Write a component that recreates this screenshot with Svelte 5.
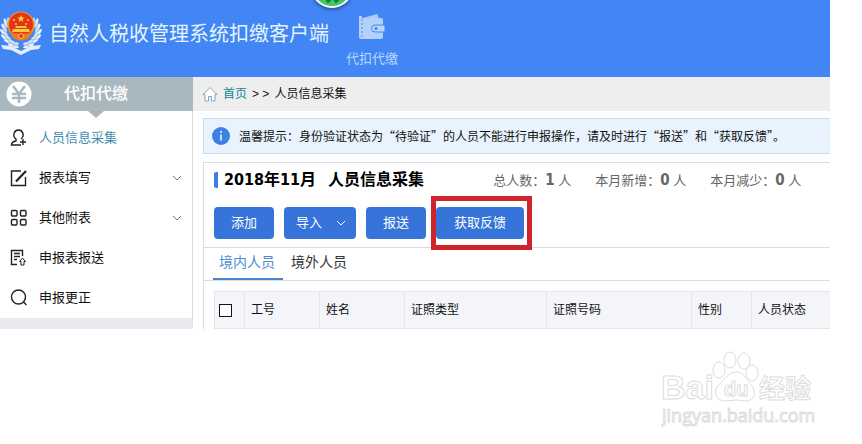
<script lang="ts">
  interface MenuItem {
    label: string;
    icon: string;
    active?: boolean;
    expandable?: boolean;
  }

  const menu: MenuItem[] = [
    { label: "人员信息采集", icon: "person", active: true },
    { label: "报表填写", icon: "edit", expandable: true },
    { label: "其他附表", icon: "grid", expandable: true },
    { label: "申报表报送", icon: "submit" },
    { label: "申报更正", icon: "search" },
  ];

  const stats = [
    { label: "总人数", value: 1 },
    { label: "本月新增", value: 0 },
    { label: "本月减少", value: 0 },
  ];

  const tabs = ["境内人员", "境外人员"];
  const columns = [
    { label: "工号", width: 75 },
    { label: "姓名", width: 85 },
    { label: "证照类型", width: 142 },
    { label: "证照号码", width: 145 },
    { label: "性别", width: 60 },
    { label: "人员状态", width: 0 },
  ];

  // leaf positions along the left half of the wreath, mirrored for the right
  const leaves = [
    [5, 10, -15],
    [3, 15, -25],
    [2, 20, -35],
    [3, 25, -45],
    [6, 29, -60],
    [10, 33, -70],
    [15, 35, -85],
  ];

  let activeTab = $state(0);
  let allChecked = $state(false);
</script>

<div class="client">
  <header class="topbar">
    <svg class="emblem" viewBox="0 0 40 44" aria-hidden="true">
      {#each [false, true] as flipped}
        <g transform={flipped ? "translate(40 0) scale(-1 1)" : undefined}>
          <path d="M6 9C1 20 4 30 17 35" fill="none" stroke="#9fbce3" stroke-width="4" />
          {#each leaves as [x, y, angle]}
            <g transform={`translate(${x} ${y}) rotate(${angle})`}>
              <ellipse cx="-1" rx="1.3" ry="3" fill="#e8f1fb" />
              <ellipse cx="2.500" rx="1.2" ry="2.800" fill="#d3e1f3" />
            </g>
          {/each}
        </g>
      {/each}
      <path d="M0 34L10 35 20 40 30 35 40 34 38 38 30 39 20 44 10 39 2 38Z" fill="#e3eefb" />
      <circle cx="20" cy="14" r="13.5" fill="#f2952b" />
      <circle cx="20" cy="13.5" r="12" fill="#e43417" />
      <path d="M20 4l1 2.500h2.700l-2.200 1.700.8 2.700-2.300-1.600-2.300 1.600.8-2.700-2.200-1.700H19z" fill="#ffdc40" />
      <g fill="#ffc83c">
        <circle cx="13" cy="9" r="1" /><circle cx="27" cy="9" r="1" />
        <circle cx="15" cy="13" r="1" /><circle cx="25" cy="13" r="1" />
        <path d="M15 15h10l1 2H14zM12 18h16l1 3H11z" />
      </g>
      <path d="M9 21q11 4 22 0l-3 6q-8 5-16 0z" fill="#ef7a25" />
      <circle cx="20" cy="25" r="2.500" fill="#e0431c" stroke="#ffc04a" />
    </svg>
    <h1>自然人税收管理系统扣缴客户端</h1>
    <a class="module" href="#withhold">
      <svg viewBox="0 0 28 26" width="28" height="26" aria-hidden="true">
        <path d="M5 4L19 0l2 4z" fill="#a9ccfb" />
        <path d="M1 2h3v2h19q2 0 2 2v17q0 2-2 2H3q-2 0-2-2z" fill="#b4d1fb" />
        <path d="M4 5v19" stroke="#4e89e8" stroke-dasharray="2 2" />
        <path d="M27 11H17q-3.500 0-3.500 3.500T17 18h10z" fill="#b9d5fc" stroke="#4285f4" />
        <circle cx="18" cy="14.500" r="1.500" fill="#4285f4" />
      </svg>
      <span>代扣代缴</span>
    </a>
    <span class="float-ball">
      <svg viewBox="0 0 42 42" width="42" height="42" aria-hidden="true">
        <circle cx="21" cy="21" r="20" fill="#47c665" stroke="#fff" stroke-width="2" />
        <path d="M15 33l2 3 3-3m3 0l2 3 3-3" fill="none" stroke="#187c31" stroke-width="2" />
      </svg>
    </span>
  </header>

  <div class="body">
    <aside class="sidebar">
      <div class="side-title">
        <svg viewBox="0 0 26 26" width="26" height="26" aria-hidden="true">
          <circle cx="13" cy="13" r="12.500" fill="#fff" />
          <path d="M7 5l6 8 6-8M13 13v9M6 13h14M6 17h14" fill="none" stroke="#a9b8bf" stroke-width="2.500" />
        </svg>
        <h2>代扣代缴</h2>
      </div>
      <nav>
        {#each menu as item}
          <a href="#menu" class="menu-item" class:active={item.active}>
            <svg class="menu-icon" viewBox="0 0 18 18" aria-hidden="true">
              {#if item.icon === "person"}
                <path d="M11 16H1.500c0-2.500 1.500-3.500 4.500-4V10C4 8.500 3.500 6 4.200 4q1-3 4.300-3t4.300 3c.7 2 .2 4.500-1.800 6M13 10v6M10 13h6" />
              {:else if item.icon === "edit"}
                <path d="M11 2H1.500v14.500h14V8" />
                <path d="M6 12.500L16 2" stroke-width="2.200" />
              {:else if item.icon === "grid"}
                <rect x="1.500" y="1.500" width="5.500" height="5.500" rx="1" />
                <rect x="10.500" y="1.500" width="5.500" height="5.500" rx="1" />
                <rect x="1.500" y="10.500" width="5.500" height="5.500" rx="1" />
                <rect x="10.500" y="10.500" width="5.500" height="5.500" rx="1" />
              {:else if item.icon === "submit"}
                <path d="M7 15.500H1.500v-14h11V7M4 4.500h6M4 7.500h6M4 10.500h3" />
                <path d="M12.500 9L9.500 12.500h1.500v3.500h3v-3.500h1.500z" stroke-width="1" />
              {:else}
                <circle cx="8.500" cy="8" r="7" />
                <path d="M13.500 13l3 3" />
              {/if}
            </svg>
            <span>{item.label}</span>
            {#if item.expandable}
              <svg class="chevron" viewBox="0 0 10 6" width="10" height="6" aria-hidden="true">
                <path d="M1 1l4 4 4-4" />
              </svg>
            {/if}
          </a>
        {/each}
      </nav>
    </aside>

    <main>
      <div class="breadcrumb">
        <svg viewBox="0 0 16 16" width="16" height="16" aria-hidden="true">
          <path d="M1 8.500L8 1.500l7 7h-2V15H9.500v-4.500h-3V15H3V8.500z" fill="#fff" stroke="#84a5b9" />
        </svg>
        <a href="#home">首页</a>
        <span>&gt; &gt;</span>
        <span>人员信息采集</span>
      </div>

      <div class="content">
        <div class="tip">
          <svg viewBox="0 0 18 18" width="18" height="18" aria-hidden="true">
            <circle cx="9" cy="9" r="9" fill="#3b80e6" />
            <path d="M9 4v2M9 7.500v6" stroke="#fff" stroke-width="1.500" />
          </svg>
          <p lang="zh-CN">温馨提示：身份验证状态为“待验证”的人员不能进行申报操作，请及时进行“报送”和“获取反馈”。</p>
        </div>

        <section class="panel">
          <div class="heading">
            <h3><span>2018年11月</span><span>人员信息采集</span></h3>
            <div class="stats">
              {#each stats as stat}
                <span>{stat.label}：<b>{stat.value}</b> 人</span>
              {/each}
            </div>
          </div>

          <div class="toolbar">
            <button type="button">添加</button>
            <button type="button" class="dropdown">
              导入
              <svg class="chevron" viewBox="0 0 10 6" width="10" height="6" aria-hidden="true">
                <path d="M1 1l4 4 4-4" />
              </svg>
            </button>
            <button type="button">报送</button>
            <button type="button" class="marked">获取反馈</button>
          </div>

          <div class="tabs" role="tablist">
            {#each tabs as tab, i}
              <button
                type="button"
                role="tab"
                aria-selected={activeTab === i}
                class:selected={activeTab === i}
                onclick={() => (activeTab = i)}
              >
                {tab}
              </button>
            {/each}
          </div>

          <table>
            <thead>
              <tr>
                <th class="check"><input type="checkbox" aria-label="全选" bind:checked={allChecked} /></th>
                {#each columns as col}
                  <th style:width={col.width ? `${col.width}px` : "auto"}>{col.label}</th>
                {/each}
              </tr>
            </thead>
          </table>
        </section>
      </div>
    </main>
  </div>
</div>

<footer>
  <svg class="watermark" viewBox="0 0 160 80" width="160" height="80">
    <text x="0" y="48" class="brand">Bai</text>
    <ellipse cx="58" cy="19" rx="6" ry="8" />
    <ellipse cx="69" cy="9" rx="6" ry="8" />
    <ellipse cx="83" cy="10" rx="6" ry="8" />
    <ellipse cx="91" cy="22" rx="6" ry="8" />
    <path d="M75 21q6 0 9 5l8 10q5 12-6 14-11-2-22 0-12-1-9-13l10-11q4-5 10-5z" />
    <text x="63" y="45" class="du">du</text>
    <text x="98" y="47" class="cjk">经验</text>
    <text x="1" y="71" class="site">jingyan.baidu.com</text>
  </svg>
</footer>

<style>
  :global(body) {
    margin: 0;
    background: #fff;
    color: #111;
    font: 12px/20px "Liberation Sans", "Noto Sans CJK SC", sans-serif;
  }

  h1,
  h2,
  h3,
  p {
    margin: 0;
    font-weight: 400;
  }

  a {
    text-decoration: none;
  }

  .client {
    margin-right: 32px;
  }

  .topbar {
    position: relative;
    display: flex;
    height: 77px;
    background: #4285f4;
    color: #e4f5ff;
  }

  .emblem {
    width: 42px;
    height: 44px;
    margin-top: 11px;
  }

  h1 {
    margin: 19px 0 0 7px;
    font-size: 20px;
    line-height: 30px;
  }

  .module {
    display: flex;
    flex-direction: column;
    align-items: center;
    gap: 9px;
    margin: 14px 0 0 17px;
    color: #b9dbff;
    font-size: 13px;
  }

  .float-ball {
    position: absolute;
    left: 311px;
    top: -34px;
    height: 42px;
    border-radius: 50%;
    box-shadow: 0 1px 4px #1c4585;
    clip-path: inset(34px -6px -6px);
  }

  .body {
    display: flex;
  }

  .sidebar {
    box-sizing: border-box;
    flex: none;
    width: 193px;
    border-right: 1px solid #dcdce0;
    border-bottom: 11px solid #e9eaee;
  }

  .side-title {
    position: relative;
    display: flex;
    align-items: center;
    gap: 32px;
    height: 34px;
    margin-right: -1px;
    padding-left: 6px;
    background: #a9b8bf;
    color: #fff;
  }

  .side-title::after {
    content: "";
    position: absolute;
    left: 88px;
    top: 34px;
    border: 8px solid transparent;
    border-top: 7px solid #a9b8bf;
    border-bottom: 0;
  }

  h2 {
    font-size: 16px;
    font-weight: 500;
  }

  nav {
    padding: 7px 0 0;
  }

  .menu-item {
    display: flex;
    align-items: center;
    gap: 11px;
    height: 40px;
    padding: 0 10px;
    color: #111;
    font-size: 13px;
  }

  .menu-item.active {
    color: #438bad;
  }

  .menu-icon {
    width: 18px;
    height: 18px;
    fill: none;
    stroke: #222;
    stroke-width: 1.4;
  }

  .chevron {
    fill: none;
    stroke: currentColor;
  }

  .menu-item .chevron {
    margin-left: auto;
    color: #777;
  }

  main {
    flex: 1;
    min-width: 0;
  }

  .breadcrumb {
    display: flex;
    align-items: center;
    gap: 5px;
    height: 34px;
    padding-left: 9px;
    background: #eee;
  }

  .breadcrumb a {
    color: #16839b;
  }

  .content {
    padding: 7px 0 0 10px;
  }

  .tip {
    display: flex;
    align-items: center;
    gap: 9px;
    height: 34px;
    padding-left: 8px;
    background: #e8f3fd;
    border: 1px solid #cbdcec;
    border-right: 0;
    font-family: "Noto Sans CJK SC", sans-serif;
  }

  .panel {
    margin-top: 8px;
    border: 1px solid #dcdce0;
    border-width: 1px 0 0 1px;
  }

  .heading {
    display: flex;
    align-items: center;
    height: 34px;
    padding-left: 10px;
  }

  h3 {
    display: flex;
    gap: 12px;
    padding-left: 6px;
    border-left: 4px solid #3b80e6;
    border-radius: 2px;
    color: #000;
    font: bold 16px/16px "DejaVu Sans Condensed", "Noto Sans CJK SC", sans-serif;
  }

  .stats {
    display: flex;
    gap: 24px;
    margin-left: 69px;
    color: #666;
    font-size: 13px;
  }

  .stats b {
    font-family: "DejaVu Sans Condensed", sans-serif;
    font-size: 15px;
  }

  .toolbar {
    display: flex;
    gap: 10px;
    padding: 10px 10px 8px;
    border-bottom: 1px solid #dcdce0;
  }

  button {
    border: 0;
    font: 13px/20px "Liberation Sans", "Noto Sans CJK SC", sans-serif;
    cursor: pointer;
  }

  .toolbar button {
    position: relative;
    height: 32px;
    padding: 0 17px;
    border-radius: 4px;
    background: #3674d9;
    color: #fff;
  }

  .toolbar .dropdown {
    display: flex;
    align-items: center;
    gap: 14px;
    padding: 0 10px 0 12px;
  }

  .toolbar .marked {
    padding: 0 18px;
  }

  .marked::after {
    content: "";
    position: absolute;
    inset: -11px -8px -11px -5px;
    border: 5px solid #d0242d;
  }

  .tabs {
    display: flex;
    gap: 2px;
    height: 32px;
    padding-left: 9px;
    border-bottom: 1px solid #dcdce0;
  }

  .tabs button {
    padding: 0 8px 2px 6px;
    border-bottom: 2px solid transparent;
    background: none;
    color: #333;
    font-size: 14px;
  }

  .tabs .selected {
    border-color: #4586cf;
    color: #4e8ed4;
  }

  table {
    width: calc(100% - 10px);
    margin: 10px 0 0 10px;
    border-collapse: collapse;
    table-layout: fixed;
  }

  th {
    box-sizing: border-box;
    height: 37px;
    padding: 0 6px;
    background: #f3f5f9;
    border: 1px solid #e3e5ea;
    border-right: 0;
    font-weight: 400;
    text-align: left;
  }

  .check {
    width: 30px;
    padding: 0 4px;
  }

  input {
    display: block;
    appearance: none;
    width: 13px;
    height: 13px;
    margin: 0;
    border: 1px solid #112;
    background: #fff;
  }

  input:checked {
    background: #3674d9;
  }

  footer {
    display: flex;
    justify-content: flex-end;
    padding: 22px 41px 0 0;
  }

  .watermark {
    fill: #fff;
    stroke: #ddd;
    stroke-width: 1;
  }

  .watermark text {
    font-family: "Liberation Sans", sans-serif;
    font-weight: bold;
  }

  .watermark .brand {
    font-size: 34px;
  }

  .watermark .du {
    font-size: 20px;
  }

  .watermark .cjk {
    font-family: "Noto Sans CJK SC", sans-serif;
    font-size: 26px;
  }

  .watermark .site {
    font-family: "Open Sans", sans-serif;
    font-size: 18px;
    font-weight: 400;
  }
</style>
